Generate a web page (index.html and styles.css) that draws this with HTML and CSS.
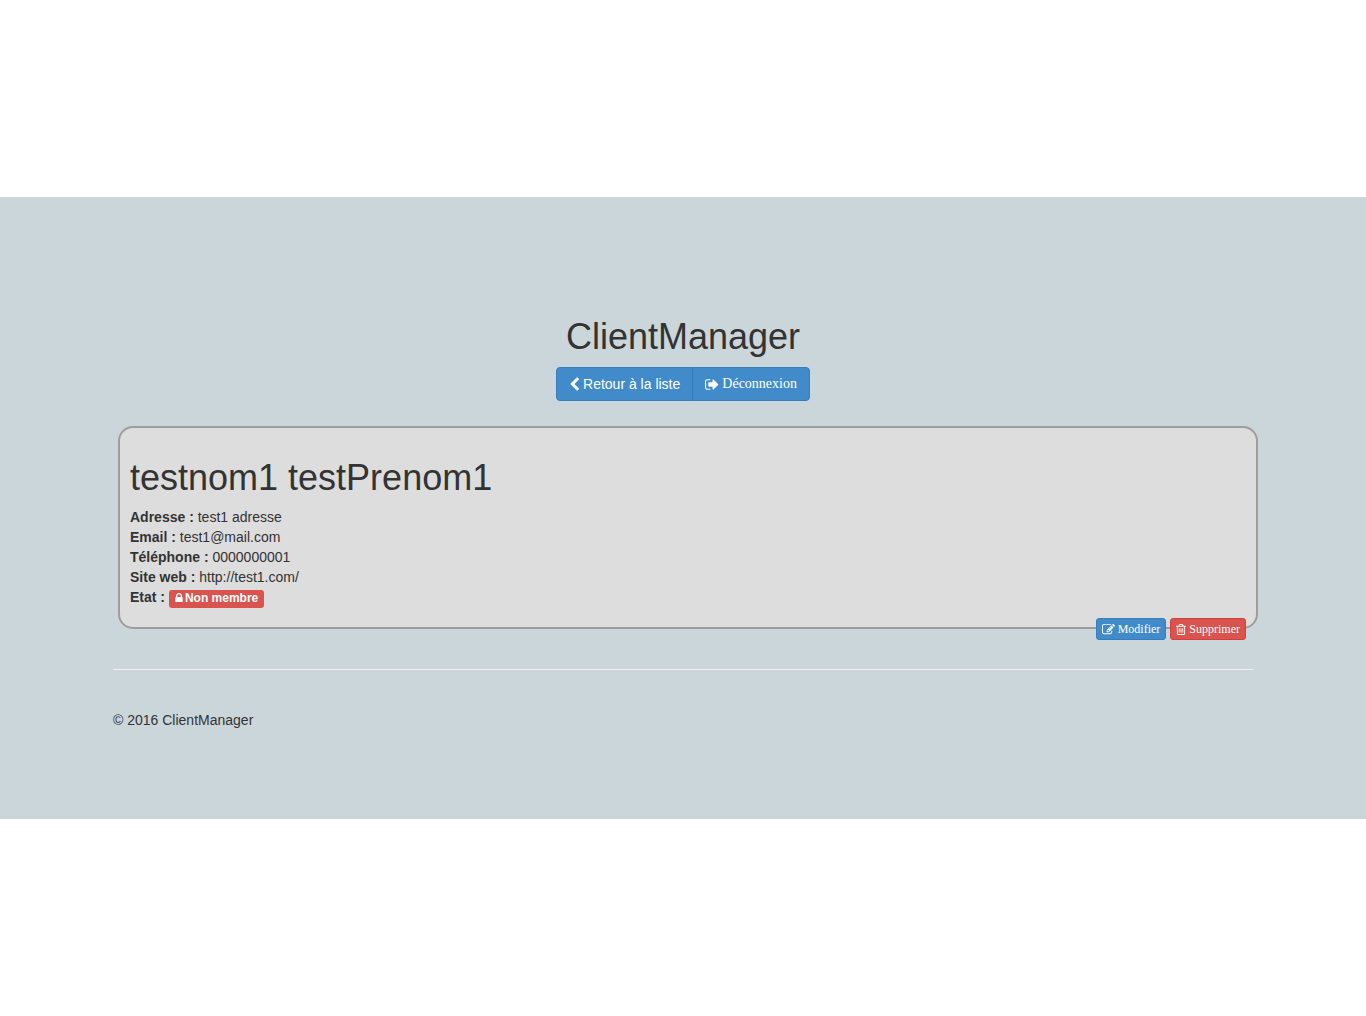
FILE: index.html
```html
<!DOCTYPE html>
<html lang="fr">
<head>
<meta charset="utf-8">
<meta name="viewport" content="width=device-width, initial-scale=1">
<title>ClientManager</title>
<link rel="stylesheet" href="styles.css">
</head>
<body>
<div class="page">
  <div class="container">
    <header class="header">
      <h1>ClientManager</h1>
      <nav class="btn-group">
        <a class="btn btn-primary" href="#liste"><svg class="icon icon-chevron" viewBox="256 0 1280 1792" aria-hidden="true"><path d="M1427 301l-531 531 531 531q19 19 19 45t-19 45l-166 166q-19 19-45 19t-45-19l-742-742q-19-19-19-45t19-45l742-742q19-19 45-19t45 19l166 166q19 19 19 45t-19 45z"/></svg>Retour à la liste</a>
        <a class="btn btn-primary btn-serif" href="#deconnexion"><svg class="icon icon-sign-out" viewBox="64 0 1664 1792" aria-hidden="true"><path d="M704 1440q0 4 1 20t.5 26.5-3 23.5-10 19.5-20.5 6.5h-320q-119 0-203.5-84.5t-84.5-203.5v-704q0-119 84.5-203.5t203.5-84.5h320q13 0 22.5 9.5t9.5 22.5q0 4 1 20t.5 26.5-3 23.5-10 19.5-20.5 6.5h-320q-66 0-113 47t-47 113v704q0 66 47 113t113 47h312l11.5 1 11.5 3 8 5.5 7 9 2 13.5zm928-544q0 26-19 45l-544 544q-19 19-45 19t-45-19-19-45v-288h-448q-26 0-45-19t-19-45v-384q0-26 19-45t45-19h448v-288q0-26 19-45t45-19 45 19l544 544q19 19 19 45z"/></svg>Déconnexion</a>
      </nav>
    </header>

    <main class="card">
      <h1>testnom1 testPrenom1</h1>
      <p class="details">
        <strong>Adresse :</strong> test1 adresse<br>
        <strong>Email :</strong> test1@mail.com<br>
        <strong>Téléphone :</strong> 0000000001<br>
        <strong>Site web :</strong> http://test1.com/<br>
        <strong>Etat :</strong> <span class="label"><svg class="icon icon-lock" viewBox="320 128 1152 1408" aria-hidden="true"><path d="M640 768h512v-192q0-106-75-181t-181-75-181 75-75 181v192zm832 96v576q0 40-28 68t-68 28h-960q-40 0-68-28t-28-68v-576q0-40 28-68t68-28h32v-192q0-184 132-316t316-132 316 132 132 316v192h32q40 0 68 28t28 68z"/></svg>Non membre</span>
      </p>
      <div class="actions">
        <button type="button" class="btn btn-xs btn-serif btn-primary"><svg class="icon icon-edit" viewBox="0 0 1792 1792" aria-hidden="true"><path d="M888 1184l116-116-152-152-116 116v56h96v96h56zm440-720q-16-16-33 1l-350 350q-17 17-1 33t33-1l350-350q17-17 1-33zm80 594v190q0 119-84.5 203.5t-203.5 84.5h-832q-119 0-203.5-84.5t-84.5-203.5v-832q0-119 84.5-203.5t203.5-84.5h832q63 0 117 25 15 7 18 23 3 17-9 29l-49 49q-14 14-32 8-23-6-45-6h-832q-66 0-113 47t-47 113v832q0 66 47 113t113 47h832q66 0 113-47t47-113v-126q0-13 9-22l64-64q15-15 35-7t20 29zm-96-738l288 288-672 672h-288v-288zm444 132l-92 92-288-288 92-92q28-28 68-28t68 28l152 152q28 28 28 68t-28 68z"/></svg>Modifier</button>
        <button type="button" class="btn btn-xs btn-serif btn-danger"><svg class="icon icon-trash" viewBox="192 128 1408 1536" aria-hidden="true"><path d="M704 736v576q0 14-9 23t-23 9h-64q-14 0-23-9t-9-23v-576q0-14 9-23t23-9h64q14 0 23 9t9 23zm256 0v576q0 14-9 23t-23 9h-64q-14 0-23-9t-9-23v-576q0-14 9-23t23-9h64q14 0 23 9t9 23zm256 0v576q0 14-9 23t-23 9h-64q-14 0-23-9t-9-23v-576q0-14 9-23t23-9h64q14 0 23 9t9 23zm128 724v-948h-896v948q0 22 7 40.5t14.5 27 10.5 8.5h832q3 0 10.5-8.5t14.5-27 7-40.5zm-672-1076h448l-48-117q-7-9-17-11h-317q-10 2-17 11zm928 32v64q0 14-9 23t-23 9h-96v948q0 83-47 143.5t-113 60.5h-832q-66 0-113-58.5t-47-141.5v-952h-96q-14 0-23-9t-9-23v-64q0-14 9-23t23-9h309l70-167q15-37 54-63t79-26h320q40 0 79 26t54 63l70 167h309q14 0 23 9t9 23z"/></svg>Supprimer</button>
      </div>
    </main>

    <footer class="footer">
      <p>© 2016 ClientManager</p>
    </footer>
  </div>
</div>
</body>
</html>
```
FILE: styles.css
```css
*, *::before, *::after {
  box-sizing: border-box;
}

body {
  margin: 0;
  min-height: 100vh;
  display: flex;
  flex-direction: column;
  justify-content: center;
  background: #fff;
  color: #333;
  font: 14px/20px "Liberation Sans", Arial, sans-serif;
}

.page {
  padding: 120px 0 89px;
  background: #cbd6da;
}

.container {
  max-width: 1170px;
  margin: 0 auto;
  padding: 0 15px;
}

h1 {
  margin: 0 0 10px;
  font-size: 36px;
  line-height: 40px;
  font-weight: 500;
}

p {
  margin: 0;
}

.header {
  margin-bottom: 25px;
  text-align: center;
}

.btn {
  display: inline-flex;
  align-items: center;
  gap: 3px;
  padding: 6px 12px;
  border: 1px solid transparent;
  border-radius: 4px;
  color: #fff;
  font: inherit;
  white-space: nowrap;
  text-decoration: none;
  cursor: pointer;
}

.btn-primary {
  background: #428bca;
  border-color: #357ebd;
}

.btn-danger {
  background: #d9534f;
  border-color: #d43f3a;
}

.btn-serif {
  font-family: "Liberation Serif", "Times New Roman", serif;
}

.btn-xs {
  padding: 1px 5px;
  border-radius: 3px;
  font-size: 12px;
  line-height: 18px;
}

.btn-group {
  display: flex;
  justify-content: center;
}

.btn-group .btn:first-child {
  border-radius: 4px 0 0 4px;
}

.btn-group .btn:last-child {
  margin-left: -1px;
  border-radius: 0 4px 4px 0;
}

.icon {
  flex: none;
  fill: currentColor;
}

.icon-chevron {
  width: 11px;
  height: 15px;
}

.icon-sign-out {
  width: 14px;
  height: 15px;
}

.icon-edit {
  width: 13px;
  height: 13px;
}

.icon-trash {
  width: 10px;
  height: 11px;
}

.card {
  margin: 0 -5px 0 5px;
  padding: 30px 10px 9px;
  background: #ddd;
  border: 2px solid #9d9d9d;
  border-radius: 15px;
}

.card h1 {
  margin-bottom: 9px;
}

.label {
  display: inline-flex;
  align-items: baseline;
  gap: 2px;
  margin: -2px 0;
  padding: 0 6px 2px;
  border-radius: 3px;
  background: #d9534f;
  color: #fff;
  font-size: 12px;
  font-weight: bold;
  line-height: 16px;
}

.icon-lock {
  width: 8px;
  height: 9px;
}

/* The buttons straddle the lower edge of the card. */
.actions {
  display: flex;
  justify-content: flex-end;
  gap: 4px;
  margin: 11px 0 -22px;
}

.footer {
  margin-top: 40px;
  padding-top: 40px;
  border-top: 1px solid #eee;
}
```
